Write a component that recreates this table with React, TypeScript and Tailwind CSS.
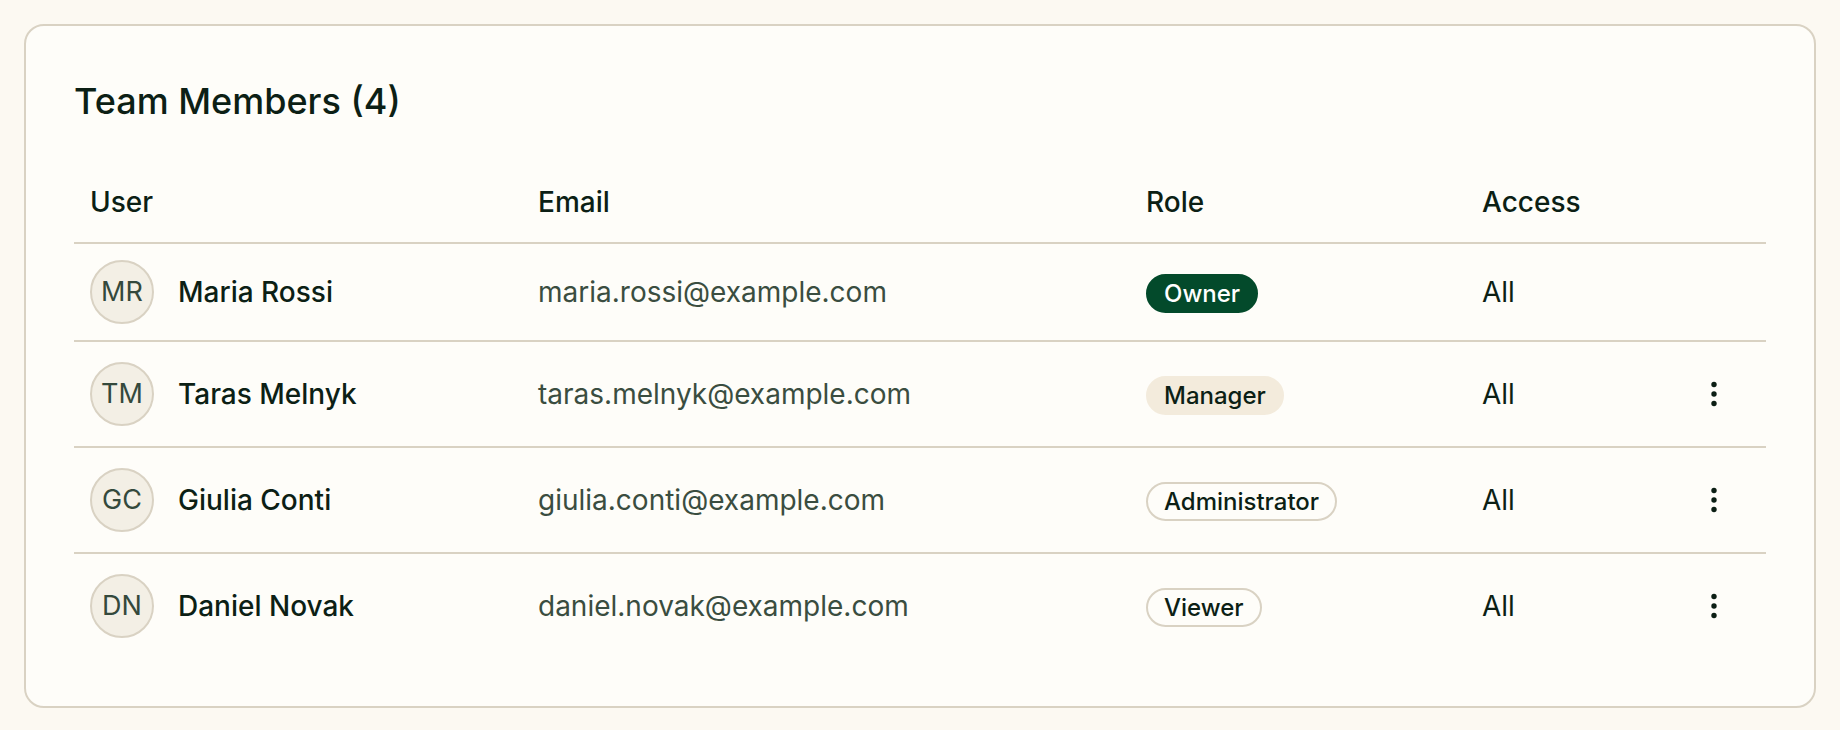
import React from "react"

type Member = {
  initials: string
  name: string
  email: string
  role: "Owner" | "Manager" | "Administrator" | "Viewer"
  access: string
  canEdit: boolean
}

const members: Member[] = [
  { initials: "MR", name: "Maria Rossi", email: "maria.rossi@example.com", role: "Owner", access: "All", canEdit: false },
  { initials: "TM", name: "Taras Melnyk", email: "taras.melnyk@example.com", role: "Manager", access: "All", canEdit: true },
  { initials: "GC", name: "Giulia Conti", email: "giulia.conti@example.com", role: "Administrator", access: "All", canEdit: true },
  { initials: "DN", name: "Daniel Novak", email: "daniel.novak@example.com", role: "Viewer", access: "All", canEdit: true },
]

function RoleBadge({ role }: { role: Member["role"] }) {
  const styles: Record<Member["role"], string> = {
    Owner: "bg-[#034a2b] border-[#034a2b] text-white",
    Manager: "bg-[#f3ebdc] border-[#f3ebdc] text-[#0c1f15]",
    Administrator: "bg-transparent border-[#d9d2c3] text-[#0c1f15]",
    Viewer: "bg-transparent border-[#d9d2c3] text-[#0c1f15]",
  }
  return (
    <span className={`inline-flex h-[39px] items-center rounded-full border-2 px-4 text-[24px] font-medium leading-none ${styles[role]}`}>
      {role}
    </span>
  )
}

function KebabIcon() {
  return (
    <svg width="12" height="30" viewBox="0 0 12 30" fill="#0c1f15">
      <circle cx="6" cy="5.5" r="2.7" />
      <circle cx="6" cy="15" r="2.7" />
      <circle cx="6" cy="24.5" r="2.7" />
    </svg>
  )
}

export default function App() {
  return (
    <div className="min-h-screen bg-[#fcf9f2] p-6 font-['Inter',sans-serif] text-[#0c1f15]">
      <div className="rounded-[20px] border-2 border-[#d9d2c3] bg-[#fefdf9] p-12">
        <h2 className="text-[36px] font-medium leading-[54px]">Team Members (4)</h2>

        <table className="mt-[35px] w-full table-fixed border-collapse">
          <colgroup>
            <col className="w-[448px]" />
            <col className="w-[608px]" />
            <col className="w-[336px]" />
            <col className="w-[196px]" />
            <col className="w-[104px]" />
          </colgroup>
          <thead>
            <tr className="h-[80px] border-b-2 border-[#d9d2c3] text-left text-[28px] font-medium">
              <th className="px-4 pb-[2px] font-medium">User</th>
              <th className="px-4 pb-[2px] font-medium">Email</th>
              <th className="px-4 pb-[2px] font-medium">Role</th>
              <th className="px-4 pb-[2px] font-medium">Access</th>
              <th className="px-4"></th>
            </tr>
          </thead>
          <tbody>
            {members.map((m, i) => (
              <tr
                key={m.email}
                className={`${i < members.length - 1 ? "border-b-2 border-[#d9d2c3]" : ""} text-[28px]`}
              >
                <td className="px-4 py-4">
                  <div className="flex items-center gap-6">
                    <div className="flex h-16 w-16 shrink-0 items-center justify-center rounded-full border-2 border-[#d9d2c3] bg-[#f3efe5] text-[27px] text-[#34493c]">
                      {m.initials}
                    </div>
                    <span className="font-medium">{m.name}</span>
                  </div>
                </td>
                <td className="px-4 py-4 text-[#3a4d40]">{m.email}</td>
                <td className="px-4 py-4">
                  <RoleBadge role={m.role} />
                </td>
                <td className="px-4 py-4">{m.access}</td>
                <td className="px-4 py-4">
                  {m.canEdit && (
                    <button className="flex h-[72px] w-[72px] items-center justify-center rounded-full">
                      <KebabIcon />
                    </button>
                  )}
                </td>
              </tr>
            ))}
          </tbody>
        </table>
      </div>
    </div>
  )
}
